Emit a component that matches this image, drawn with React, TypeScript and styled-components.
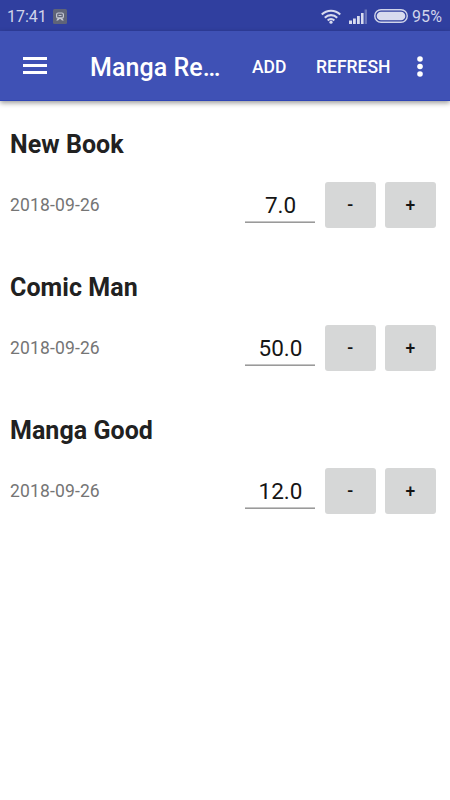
import React from "react";
import styled, { createGlobalStyle } from "styled-components";

const GlobalStyle = createGlobalStyle`
  * { box-sizing: border-box; }
  body { margin: 0; background: #fff; font-family: Roboto, sans-serif; }
`;

const Screen = styled.div`
  width: 450px;
  height: 800px;
  background: #fff;
  overflow: hidden;
`;

const StatusBar = styled.div`
  height: 31px;
  display: flex;
  align-items: center;
  padding: 1px 8px 0 7px;
  background: #303f9f;
  color: #d0d4ea;
  font-size: 16px;
`;

const Clock = styled.span`
  width: 46px;
`;

const StatusIcons = styled.div`
  margin-left: auto;
  display: flex;
  align-items: center;
`;

const SignalIcon = styled.svg`
  margin: 0 7px 0 8px;
`;

const Percent = styled.span`
  margin-left: 4px;
  width: 30px;
  letter-spacing: 0.1px;
`;

const AppBar = styled.header`
  height: 70px;
  display: flex;
  align-items: center;
  background: #3f51b5;
  border-bottom: 1px solid #2f45b5;
  color: #fff;
  padding-left: 23px;
  box-shadow: 0 2px 5px rgba(0, 0, 0, 0.4);
`;

const Title = styled.h1`
  margin: 4px 0 0 43px;
  width: 162px;
  flex: none;
  font-size: 25px;
  font-weight: 500;
  line-height: 30px;
  letter-spacing: 0.05px;
`;

const Action = styled.button<{ $width: number }>`
  width: ${(p) => p.$width}px;
  flex: none;
  padding: 3px 0 0;
  border: 0;
  background: none;
  color: #fff;
  text-align: left;
  font: 500 17.5px Roboto, sans-serif;
`;

const MoreIcon = styled.svg`
  margin-top: 1px;
`;

const List = styled.main`
  padding: 29px 0 0 10px;
`;

const Item = styled.section`
  height: 143px;
`;

const Name = styled.h2`
  margin: 0;
  font-size: 25px;
  line-height: 30px;
  font-weight: 700;
  letter-spacing: 0.05px;
  color: #212121;
`;

const Row = styled.div`
  display: flex;
  align-items: center;
  margin-top: 22px;
  height: 46px;
`;

const DateText = styled.span`
  width: 235px;
  flex: none;
  font-size: 17.5px;
  letter-spacing: 0.15px;
  color: #757575;
`;

const Count = styled.div`
  width: 70px;
  height: 35px;
  flex: none;
  margin-right: 10px;
  padding-left: 1px;
  border-bottom: 1px solid #9a9a9a;
  box-shadow: 0 -1px 0 #c4c4c4 inset;
  text-align: center;
  font-size: 22.5px;
  line-height: 34px;
  color: #151515;
`;

const StepButton = styled.button`
  width: 50.5px;
  height: 45.5px;
  flex: none;
  margin-right: 9.5px;
  padding: 0;
  border: 0;
  border-radius: 3px;
  background: #d6d7d7;
  color: #151515;
  font: 500 17.5px Roboto, sans-serif;
`;

const books = [
  { name: "New Book", date: "2018-09-26", count: "7.0" },
  { name: "Comic Man", date: "2018-09-26", count: "50.0" },
  { name: "Manga Good", date: "2018-09-26", count: "12.0" },
];

export default function App() {
  return (
    <Screen>
      <GlobalStyle />
      <StatusBar>
        <Clock>17:41</Clock>
        <svg width="14" height="15" viewBox="0 0 14 15" fill="none">
          <rect width="14" height="15" rx="1.5" fill="#5f6478" />
          <rect x="3.6" y="4" width="6.8" height="5" rx="1.6" stroke="#c4c8d4" strokeWidth="1.2" />
          <path d="M3.2 11.5L5.200 8.500H8.800L10.800 11.500H9L7 9.800L5 11.500z" fill="#c4c8d4" />
          <path d="M5.5 6.500H8.500" stroke="#c4c8d4" />
        </svg>
        <StatusIcons>
          <svg width="20" height="15" viewBox="0 0 20 15" fill="none" stroke="#d8dbef" strokeWidth="2.1">
            <path d="M.8 5.600A13 13 0 0 1 19.200 5.600M3.800 8.700A8.800 8.800 0 0 1 16.200 8.700M6.700 11.500A4.700 4.700 0 0 1 13.300 11.500" />
            <circle cx="10" cy="13.200" r="1.600" fill="#d8dbef" stroke="none" />
          </svg>
          <SignalIcon width="18" height="15" viewBox="0 0 18 15" fill="#d8dbef">
            <path d="M0 11.500h3V15H0zM4 9.500h2.800V15H4zM8 7h2.800v8H8zM12 4h2.600v11H12z" />
            <path d="M15.600.5h2.400V15h-2.400z" opacity=".35" />
          </SignalIcon>
          <svg width="34" height="14" viewBox="0 0 34 14" fill="none">
            <rect x=".75" y=".75" width="32.500" height="12.500" rx="6.250" stroke="#d0d4ea" strokeWidth="1.400" />
            <rect x="2.700" y="2.700" width="28.600" height="8.600" rx="4.300" fill="#d8dbef" />
          </svg>
          <Percent>95%</Percent>
        </StatusIcons>
      </StatusBar>
      <AppBar>
        <svg width="24" height="17" viewBox="0 0 24 17" fill="#fff">
          <path d="M0 0h24v3H0zM0 7h24v3H0zM0 14h24v3H0z" />
        </svg>
        <Title>Manga Re…</Title>
        <Action $width={64}>ADD</Action>
        <Action $width={101}>REFRESH</Action>
        <MoreIcon width="6" height="21" viewBox="0 0 6 21" fill="#fff">
          <circle cx="3" cy="3" r="2.800" />
          <circle cx="3" cy="10.500" r="2.800" />
          <circle cx="3" cy="18" r="2.800" />
        </MoreIcon>
      </AppBar>
      <List>
        {books.map((book) => (
          <Item key={book.name}>
            <Name>{book.name}</Name>
            <Row>
              <DateText>{book.date}</DateText>
              <Count>{book.count}</Count>
              <StepButton>-</StepButton>
              <StepButton>+</StepButton>
            </Row>
          </Item>
        ))}
      </List>
    </Screen>
  );
}
